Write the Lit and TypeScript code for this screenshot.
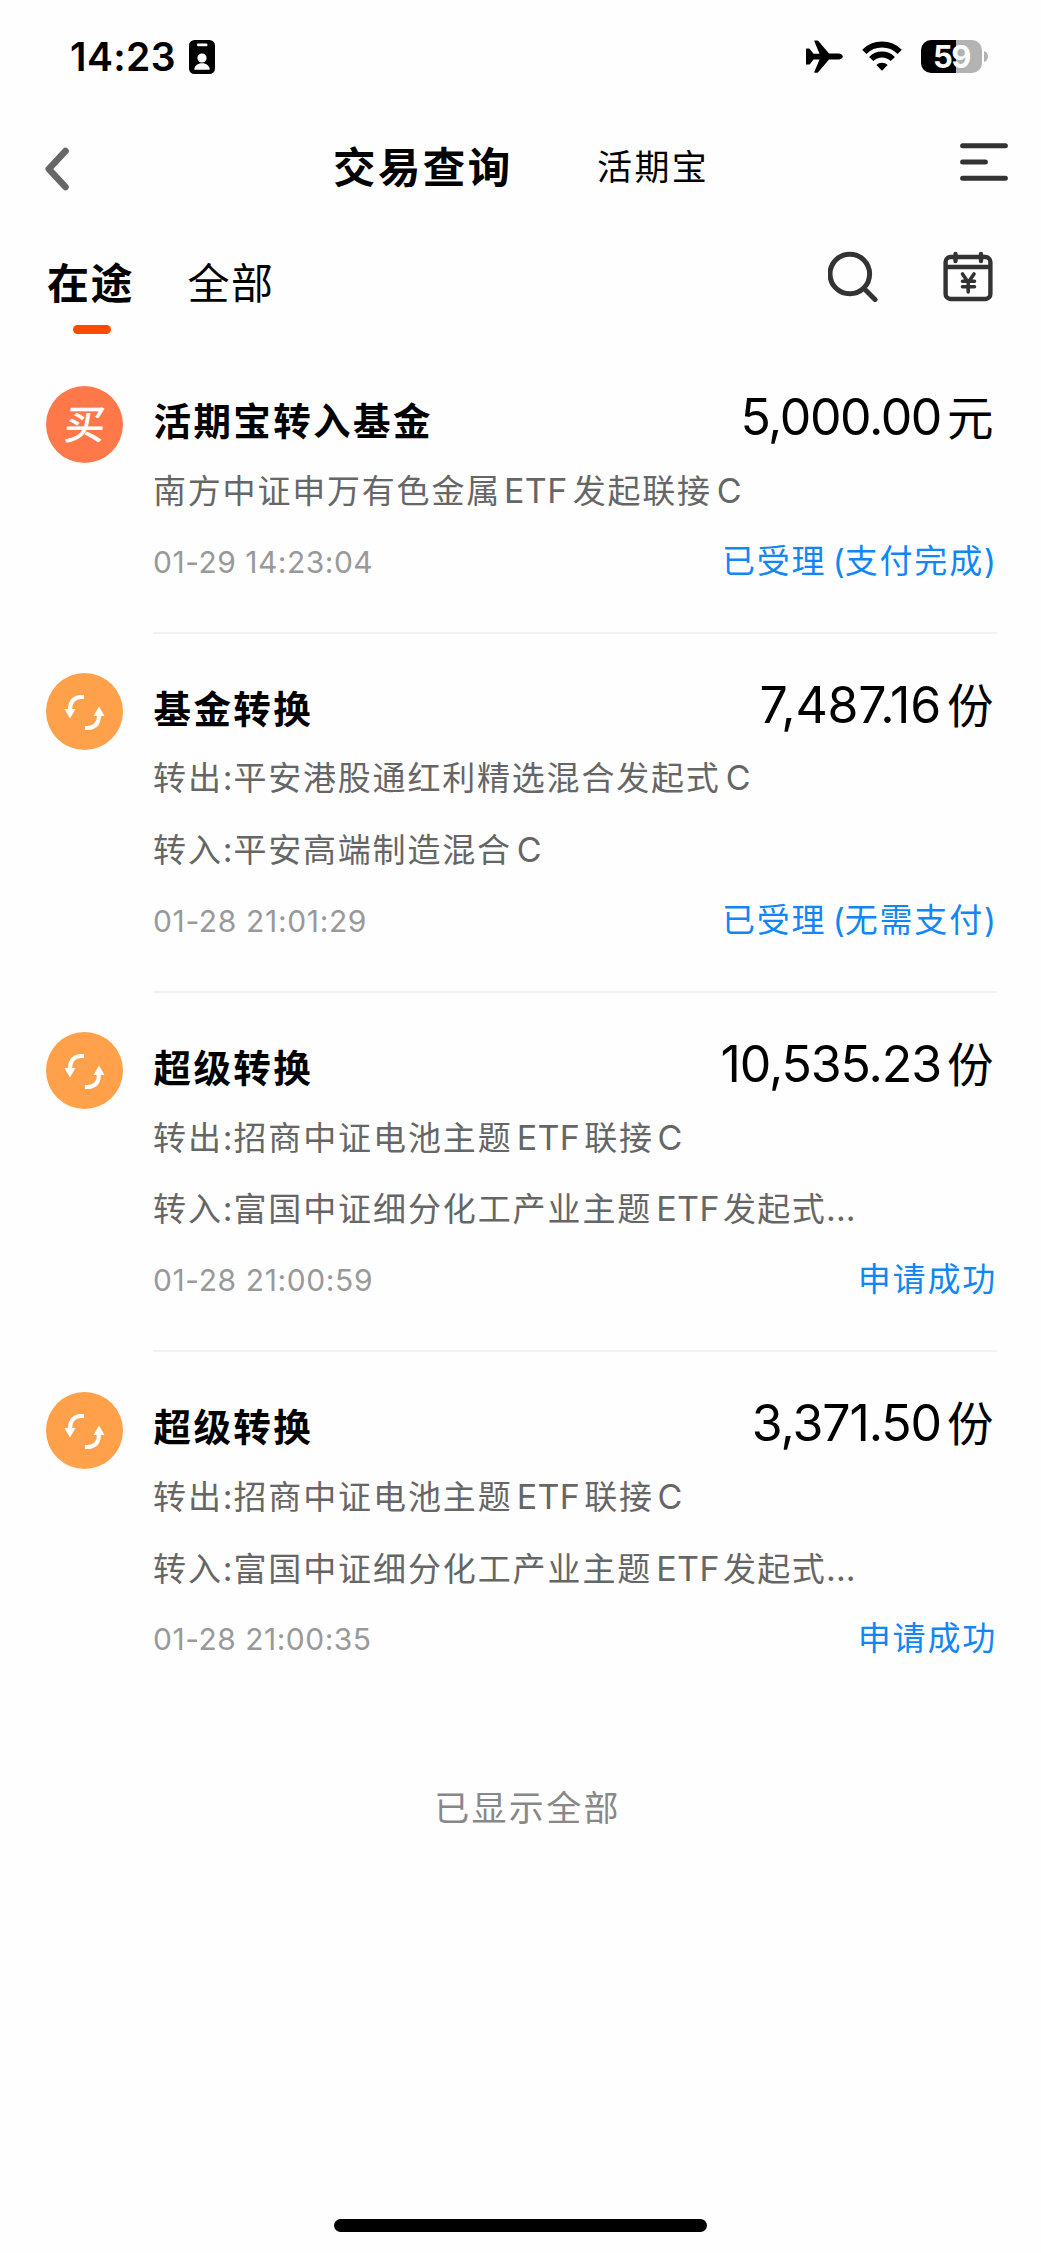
import { LitElement, html, css } from "lit";
import { customElement, property } from "lit/decorators.js";
import { styleMap } from "lit/directives/style-map.js";

/** A stretch of text in one script, with its own tracking in px. */
type Run = { t: string; ls: number; latin?: boolean; gap?: number };

interface Order {
  kind: "buy" | "swap";
  title: string;
  amount: string;
  amountTracking: number;
  unit: string;
  lines: Run[][];
  time: string;
  timeTracking: number;
  status: Run[];
}

const C = (gap = 5): Run => ({ t: "C", ls: 0, latin: true, gap });
const ETF = (gap = 4): Run => ({ t: "ETF", ls: 0.4, latin: true, gap });
const colon: Run = { t: ":", ls: 0.8, latin: true };
const success: Run[] = [{ t: "申请成功", ls: 1.8 }];
const superLines: Run[][] = [
  [{ t: "转出", ls: 1.9 }, colon, { t: "招商中证电池主题", ls: 1.9 }, ETF(), { t: "联接", ls: 1.6, gap: 4 }, C(4)],
  [{ t: "转入", ls: 1.9 }, colon, { t: "富国中证细分化工产业主题", ls: 1.9 }, ETF(), { t: "发起式", ls: 1.4, gap: 3 }, { t: "...", ls: 0, latin: true }],
];

const ORDERS: Order[] = [
  {
    kind: "buy",
    title: "活期宝转入基金",
    amount: "5,000.00",
    amountTracking: -1.4,
    unit: "元",
    lines: [[{ t: "南方中证申万有色金属", ls: 1.8 }, ETF(3), { t: "发起联接", ls: 1.8, gap: 5 }, C(5)]],
    time: "01-29 14:23:04",
    timeTracking: 0.5,
    status: [{ t: "已受理", ls: 1.7 }, { t: "(", ls: 0, latin: true, gap: 6.5 }, { t: "支付完成", ls: 1.8 }, { t: ")", ls: 0, latin: true }],
  },
  {
    kind: "swap",
    title: "基金转换",
    amount: "7,487.16",
    amountTracking: -0.2,
    unit: "份",
    lines: [
      [{ t: "转出", ls: 1.9 }, colon, { t: "平安港股通红利精选混合发起式", ls: 1.8 }, C()],
      [{ t: "转入", ls: 1.9 }, colon, { t: "平安高端制造混合", ls: 1.8 }, C()],
    ],
    time: "01-28 21:01:29",
    timeTracking: 0.65,
    status: [{ t: "已受理", ls: 1.7 }, { t: "(", ls: 0, latin: true, gap: 6.5 }, { t: "无需支付", ls: 1.8 }, { t: ")", ls: 0, latin: true }],
  },
  {
    kind: "swap",
    title: "超级转换",
    amount: "10,535.23",
    amountTracking: -1.1,
    unit: "份",
    lines: superLines,
    time: "01-28 21:00:59",
    timeTracking: 0.6,
    status: success,
  },
  {
    kind: "swap",
    title: "超级转换",
    amount: "3,371.50",
    amountTracking: -1.1,
    unit: "份",
    lines: superLines,
    time: "01-28 21:00:35",
    timeTracking: 0.5,
    status: success,
  },
];

const renderRuns = (runs: Run[]) =>
  runs.map(
    (r) => html`<span class=${r.latin ? "latin" : "han"} style=${styleMap({ letterSpacing: `${r.ls}px`, marginLeft: `${r.gap ?? 0}px` })}>${r.t}</span>`
  );

@customElement("status-bar")
class StatusBar extends LitElement {
  static styles = css`
    :host { display: flex; height: 112px; padding: 0 53px 0 70px; align-items: center; box-sizing: border-box; font-family: Inter, sans-serif; }
    .clock { font-size: 39px; font-weight: 600; line-height: 48px; width: 119px; white-space: nowrap; letter-spacing: 0.4px; margin-top: 2px; }
    .spacer { flex: 1; }
    svg { display: block; flex: none; }
    .badge { margin-top: 2px; }
    .plane { margin-right: 19px; margin-top: 1px; }
    .wifi { margin-right: 19px; }
    .battery { width: 61px; height: 33px; border-radius: 10px; background: linear-gradient(90deg, #000 35px, #b3b3b3 35px); color: #fff; font-size: 31px; font-weight: 700; line-height: 34px; text-align: center; letter-spacing: -1.4px; box-sizing: border-box; margin-top: 1px; }
    .nub { margin-left: 2px; margin-top: 1px; }
  `;
  render() {
    return html`
      <span class="clock">14:23</span>
      <svg class="badge" width="26" height="34" viewBox="0 0 26 34">
        <rect width="26" height="34" rx="5.5" />
        <rect x="8" y="3.6" width="10.5" height="2.6" rx="1.3" fill="#fff" />
        <circle cx="13" cy="18" r="4.6" fill="#fff" />
        <path d="M5.3 29.8c0-4.2 3.4-6.6 7.7-6.6s7.7 2.4 7.7 6.6z" fill="#fff" />
      </svg>
      <span class="spacer"></span>
      <svg class="plane" width="37" height="33" viewBox="0 0 37 33">
        <path d="M.6 8.6h2.200q.7 0 1.200.7L7.500 13.700h6L8.300 1.200Q8 .4 8.800.4h2.400q.7 0 1.200.600L23 13.600h9.500c2.400 0 4.300 1.500 4.300 3s-1.900 3-4.300 3H23L12.400 32.100q-.5.600-1.200.6H8.800q-.8 0-.5-.8l5.200-12.400h-6L4 24q-.5.600-1.200.6H.6q-.6 0-.6-.7V9.300q0-.7.600-.7z" />
      </svg>
      <svg class="wifi" width="40" height="30" viewBox="0 0 40 30">
        <g fill="none" stroke="#000" stroke-width="6">
          <path d="M2.300 10.800a25 25 0 0 1 35.400 0" />
          <path d="M9.200 18a15.300 15.300 0 0 1 21.600 0" />
        </g>
        <path d="M20 29.800l-5.700-5.700a8 8 0 0 1 11.400 0z" />
      </svg>
      <div class="battery">59</div>
      <svg class="nub" width="4" height="11" viewBox="0 0 4 11"><path d="M0 0c2.500.7 4 2.900 4 5.500S2.500 10.300 0 11z" fill="#b3b3b3" /></svg>
    `;
  }
}

@customElement("order-item")
class OrderItem extends LitElement {
  @property({ attribute: false }) order!: Order;

  static styles = css`
    :host { display: flex; align-items: flex-start; padding-left: 46px; padding-right: 44.500px; }
    .badge { flex: none; width: 77px; height: 77px; margin-top: 39.500px; margin-right: 30px; border-radius: 50%; background: #ffa04a; display: flex; align-items: center; justify-content: center; }
    .buy { background: #ff784a; color: #fff; font-size: 40px; font-weight: 400; line-height: 1; }
    .buy span { transform: skewX(-6deg) translateY(-2px); -webkit-text-stroke: 0.700px #fff; }
    .body { flex: 1; min-width: 0; padding-top: 36px; height: 359.300px; box-sizing: border-box; border-bottom: 2px solid #f2f2f2; }
    :host(.short) .body { height: 287.500px; }
    :host(.last) .body { border-bottom-color: transparent; }
    .row { display: flex; justify-content: space-between; align-items: baseline; height: 71.800px; line-height: 71.800px; white-space: nowrap; }
    .head { padding-top: 1px; margin-bottom: -1px; }
    .foot { margin-top: -2px; }
    .title { font-size: 37.500px; font-weight: 700; letter-spacing: 2.400px; color: #000; margin-left: 0.500px; }
    .amount { font-size: 50px; font-family: Inter, sans-serif; line-height: 1; margin-right: 3px; color: #000; }
    .unit { font-family: "Noto Sans CJK SC", sans-serif; font-size: 46.500px; margin-left: 6px; }
    .desc { justify-content: flex-start; font-size: 33px; color: #666; }
    .desc .latin { font-family: Inter, sans-serif; font-size: 34px; line-height: 1; }
    .time { font-family: Inter, sans-serif; font-size: 30px; color: #999; }
    .status { font-size: 33px; color: #1186f5; margin-right: -0.500px; }
    .status .latin { font-family: Inter, sans-serif; line-height: 1; }
    .status .latin:last-child { margin-right: 1px; }
  `;

  render() {
    const o = this.order;
    return html`
      ${o.kind === "buy"
        ? html`<div class="badge buy"><span>买</span></div>`
        : html`<div class="badge">
            <svg width="77" height="77" viewBox="0 0 77 77">
              <g fill="none" stroke="#fff" stroke-width="4">
                <path d="M38 24h-3Q24 24.500 24 37" />
                <path d="M39 55h3Q53 54.500 53 42" />
              </g>
              <path d="M18.500 36h11L24 45.500zM47.500 43h11L53 33.500z" fill="#fff" />
            </svg>
          </div>`}
      <div class="body">
        <div class="row head">
          <span class="title">${o.title}</span>
          <span class="amount"><span style=${styleMap({ letterSpacing: `${o.amountTracking}px` })}>${o.amount}</span><span class="unit">${o.unit}</span></span>
        </div>
        ${o.lines.map((l) => html`<div class="row desc">${renderRuns(l)}</div>`)}
        <div class="row foot">
          <span class="time" style=${styleMap({ letterSpacing: `${o.timeTracking}px` })}>${o.time}</span>
          <span class="status">${renderRuns(o.status)}</span>
        </div>
      </div>
    `;
  }
}

@customElement("app-root")
class AppRoot extends LitElement {
  static styles = css`
    :host { display: flex; flex-direction: column; width: 1041px; height: 2253px; background: #fefefe; color: #000; font-family: "Noto Sans CJK SC", sans-serif; overflow: hidden; }
    svg { display: block; flex: none; }
    .nav { display: flex; height: 114px; padding: 0 33px 0 45px; align-items: center; white-space: nowrap; }
    .heading { font-size: 42.500px; font-weight: 700; letter-spacing: 2.400px; margin-left: 264px; width: 264px; line-height: 60px; margin-top: -9px; }
    .sub { font-size: 35px; letter-spacing: 2.400px; flex: 1; line-height: 60px; margin-top: -8px; }
    .menu { margin-top: -14px; }
    .tabs { display: flex; height: 120px; padding: 0 48px 0 47px; box-sizing: border-box; align-items: flex-start; }
    .tab { font-size: 42px; line-height: 60px; letter-spacing: 1.600px; margin-top: 25px; width: 140.500px; white-space: nowrap; }
    .active { font-weight: 700; }
    .active::after { content: ""; display: block; width: 38px; height: 9px; border-radius: 5px; background: #ff4a00; margin: 14px 0 0 26px; }
    .grow { flex: 1; }
    .search { margin: 25px 65px 0 0; }
    .cal { margin-top: 25px; }
    .end { text-align: center; font-size: 35px; letter-spacing: 2.300px; color: #888; line-height: 60px; margin-top: 65px; padding-left: 14px; }
    .home { width: 373px; height: 13px; border-radius: 7px; background: #000; margin: auto auto 21px 334px; }
  `;

  render() {
    return html`
      <status-bar></status-bar>
      <div class="nav">
        <svg width="24" height="44" viewBox="0 0 24 44"><path d="M20.500 4L3.800 22l16.700 18" fill="none" stroke="#666" stroke-width="6.600" stroke-linecap="round" stroke-linejoin="round" /></svg>
        <span class="heading">交易查询</span>
        <span class="sub">活期宝</span>
        <svg class="menu" width="48" height="38" viewBox="0 0 48 38"><path d="M2.600 2.700h42.800M2.600 19h22.800M2.600 35.300h42.800" stroke="#333" stroke-width="5" stroke-linecap="round" /></svg>
      </div>
      <div class="tabs">
        <span class="tab active">在途</span>
        <span class="tab">全部</span>
        <span class="grow"></span>
        <svg class="search" width="50" height="51" viewBox="0 0 50 51"><g fill="none" stroke="#333" stroke-width="5" stroke-linecap="round"><circle cx="21.800" cy="23" r="19.800" /><path d="M36.500 38L47 48.500" /></g></svg>
        <svg class="cal" width="50" height="51" viewBox="0 0 50 51">
          <g fill="none" stroke="#333" stroke-width="4.400" stroke-linecap="round" stroke-linejoin="round">
            <rect x="2.600" y="6" width="44.800" height="42" rx="5" />
            <path d="M3 16h44.500" stroke-linecap="butt" />
            <path d="M12.500 3v7M38 3v7" />
            <path d="M19.500 23l5.700 8.500L31 23M25.200 31.500V41M19.500 30.300h12M19.500 35.800h12" stroke-width="3.600" />
          </g>
        </svg>
      </div>
      ${ORDERS.map((o, i) => html`<order-item class=${i === 0 ? "short" : i === ORDERS.length - 1 ? "last" : ""} .order=${o}></order-item>`)}
      <div class="end">已显示全部</div>
      <div class="home"></div>
    `;
  }
}
